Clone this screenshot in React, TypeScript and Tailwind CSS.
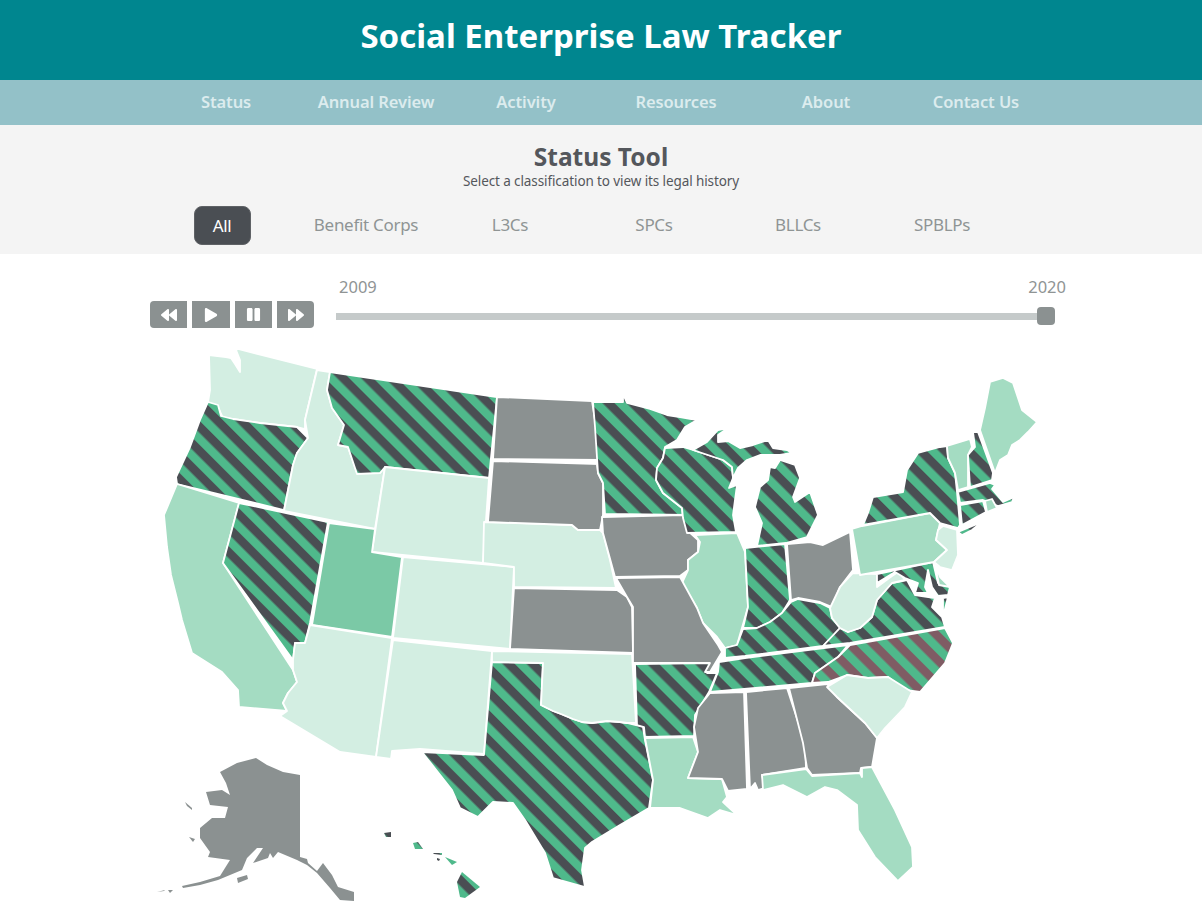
import React from 'react';
import { FaBackward, FaPlay, FaPause, FaForward } from 'react-icons/fa';

const GRAY = '#8b9191';
const PALE = '#d3eee2';
const MID = '#a4dcc2';
const UTAH = '#7bc9a6';
const STRIPE = 'url(#stripes)';
const MAUVE = 'url(#stripesRed)';

const states: { fill: string; points: string }[] = [
  // washington
  { fill: PALE, points: '209,355 226,357 231,358 235,364 240,372 240,360 236,350 238,349 317,369 305,420 305,429 297,427 260,423 233,419 223,418 218,407 208,402 210,390' },
  // oregon
  { fill: STRIPE, points: '208,402 218,405 221,416 233,419 260,423 297,427 308,438 297,453 293,465 284,510 177,484 176,477 190,447 200,420' },
  // california
  { fill: MID, points: '177,484 239,503 223,563 293,670 297,682 288,693 283,703 287,711 239,707 238,690 222,672 192,653 182,620 178,603 171,575 167,547 164,515' },
  // nevada
  { fill: STRIPE, points: '239,503 328,522 310,623 305,643 295,643 293,660 223,563' },
  // idaho
  { fill: PALE, points: '317,370 330,372 327,390 332,408 344,425 338,445 348,447 357,473 380,473 385,467 375,529 284,511 293,465 297,453 308,438 305,420' },
  // montana
  { fill: STRIPE, points: '330,372 497,397 489,478 385,467 380,473 357,474 348,447 338,445 344,425 332,408 327,390' },
  // wyoming
  { fill: PALE, points: '385,467 489,478 483,563 372,552' },
  // utah
  { fill: UTAH, points: '329,523 375,529 372,552 402,557 392,637 312,625' },
  // colorado
  { fill: PALE, points: '403,557 514,567 510,649 393,638' },
  // arizona
  { fill: PALE, points: '310,625 392,638 376,757 340,752 280,716 287,711 283,703 288,693 297,682 293,670 293,660 295,643 305,643' },
  // new mexico
  { fill: PALE, points: '393,640 492,651 484,754 420,749 392,751 391,759 376,757' },
  // texas
  { fill: STRIPE, points: '492,662 543,663 541,705 553,711 561,714 573,719 582,722 592,723 607,721 620,722 627,723 643,727 645,740 653,780 649,808 620,825 592,842 585,848 582,870 585,887 553,878 545,853 525,820 513,803 493,802 478,817 460,808 452,790 422,752 484,755' },
  // oklahoma
  { fill: PALE, points: '492,651 632,654 636,723 627,723 620,722 607,721 592,723 582,722 573,719 561,714 553,711 541,705 543,663 492,662' },
  // nebraska
  { fill: PALE, points: '484,522 572,525 578,530 600,530 603,533 610,560 616,588 514,587 514,567 483,563' },
  // kansas
  { fill: GRAY, points: '514,588 617,590 627,597 632,607 633,653 510,649' },
  // north dakota
  { fill: GRAY, points: '497,397 592,401 595,420 600,460 493,459' },
  // south dakota
  { fill: GRAY, points: '493,461 600,464 597,465 598,473 603,483 603,515 600,530 578,530 572,525 488,522' },
  // minnesota
  { fill: STRIPE, points: '593,402 623,402 623,394 627,403 650,409 667,415 680,417 697,420 685,427 677,440 665,447 663,458 657,468 656,480 663,493 682,508 683,518 687,515 605,514 603,483 598,473 595,427' },
  // iowa
  { fill: GRAY, points: '602,517 683,515 687,530 698,540 698,552 688,560 688,570 680,576 615,577 603,533' },
  // wisconsin
  { fill: STRIPE, points: '665,448 683,447 693,450 723,460 732,467 733,478 729,488 737,485 733,515 736,532 687,533 683,518 682,508 663,493 656,480 657,468 663,458' },
  // michigan upper
  { fill: STRIPE, points: '693,450 707,442 718,430 728,428 718,435 718,442 728,441 740,448 753,445 768,440 773,448 787,450 792,453 780,455 760,455 747,460 738,468 733,478 732,467 723,460' },
  // michigan lower
  { fill: STRIPE, points: '757,546 762,523 755,507 760,487 768,480 770,467 775,468 780,460 795,465 800,478 793,497 795,502 810,492 818,515 807,537 786,543' },
  // illinois
  { fill: MID, points: '695,535 737,533 745,552 748,607 737,645 725,648 717,637 703,623 697,608 682,583 688,570 688,560 698,552 700,542' },
  // indiana
  { fill: STRIPE, points: '745,548 785,544 790,600 782,613 770,622 757,628 743,628 748,607' },
  // ohio
  { fill: GRAY, points: '787,544 810,542 823,545 850,532 853,570 840,587 832,607 820,602 798,598 791,600' },
  // kentucky
  { fill: STRIPE, points: '743,629 757,628 770,622 782,613 791,602 798,599 820,603 830,608 832,618 840,628 823,646 745,656 725,658 725,648 737,645' },
  // tennessee
  { fill: STRIPE, points: '719,662 745,658 848,645 838,657 815,673 812,683 710,692 718,672' },
  // north carolina
  { fill: MAUVE, points: '850,645 945,628 953,643 945,663 920,692 905,690 888,677 868,678 847,675 828,682 812,683 815,673 838,657' },
  // virginia
  { fill: STRIPE, points: '840,628 848,632 860,628 872,617 877,600 892,583 907,580 915,595 935,598 932,607 942,617 945,627 850,643 823,646' },
  // west virginia
  { fill: PALE, points: '830,608 840,587 853,573 877,574 877,587 892,576 898,572 905,580 892,583 877,600 872,617 860,628 848,632 840,628 832,618' },
  // maryland
  { fill: STRIPE, points: '877,574 933,562 938,583 950,587 948,595 938,596 932,587 928,570 925,587 928,593 915,593 918,583 905,578 895,572 877,583' },
  // delaware
  { fill: MID, points: '935,564 940,577 950,587 939,585' },
  // virginia eastern shore
  { fill: STRIPE, points: '943,598 948,597 943,617' },
  // pennsylvania
  { fill: MID, points: '852,529 862,526 930,513 940,523 936,540 947,550 934,562 860,575' },
  // new york
  { fill: STRIPE, points: '863,525 868,513 873,497 903,492 907,470 918,453 940,447 947,446 948,458 955,473 957,492 960,525 958,528 940,523 930,513' },
  // long island
  { fill: STRIPE, points: '958,532 982,522 972,530 962,535' },
  // new jersey
  { fill: PALE, points: '938,530 943,526 957,530 958,555 952,570 940,567 934,562 947,550 936,540' },
  // vermont
  { fill: MID, points: '947,446 970,439 972,447 968,455 968,487 958,490 955,473 948,458' },
  // new hampshire
  { fill: STRIPE, points: '973,432 978,432 993,473 992,480 970,487 968,455 975,447' },
  // maine
  { fill: MID, points: '980,430 985,408 990,382 1003,378 1013,383 1022,410 1037,422 1028,432 1020,440 1012,445 1008,455 1000,460 995,473' },
  // massachusetts
  { fill: STRIPE, points: '958,492 990,483 995,485 992,489 1003,502 1012,498 1012,495 1008,494 1014,497 1012,502 998,506 983,500 960,503' },
  // connecticut
  { fill: STRIPE, points: '960,505 983,501 986,512 962,525' },
  // rhode island
  { fill: MID, points: '985,501 992,499 997,508 987,512' },
  // louisiana
  { fill: MID, points: '645,738 693,737 698,752 688,778 722,779 727,797 723,802 737,815 720,810 708,818 680,808 650,808 653,780' },
  // arkansas
  { fill: STRIPE, points: '635,664 710,663 712,671 707,673 717,673 709,692 695,715 694,736 645,737 644,727 637,725' },
  // missouri
  { fill: GRAY, points: '616,578 680,577 697,608 703,623 718,645 722,652 710,672 705,672 710,663 633,663 633,607 627,597' },
  // mississippi
  { fill: GRAY, points: '710,693 744,692 747,789 728,791 722,779 688,778 698,752 694,727 698,708' },
  // alabama
  { fill: GRAY, points: '746,692 787,688 805,743 806,768 762,775 765,788 758,790 755,783 750,789' },
  // georgia
  { fill: GRAY, points: '789,688 827,684 837,697 865,723 877,738 872,767 861,768 860,773 812,775 807,768 803,743' },
  // south carolina
  { fill: PALE, points: '827,687 847,675 868,678 888,677 912,692 905,707 885,728 877,738 865,723 837,697' },
  // florida
  { fill: MID, points: '762,775 806,769 812,776 860,773 862,777 862,768 872,767 895,810 912,847 913,867 898,881 875,857 858,830 857,805 837,790 825,787 807,797 783,785 763,790' },
];

const noStroke: { fill: string; points: string }[] = [
  // alaska
  { fill: GRAY, points: '256,758 267,765 283,772 300,775 300,857 307,859 308,863 317,871 323,863 332,875 338,887 354,892 354,901 340,900 330,888 317,873 307,865 297,860 278,852 273,858 270,853 268,858 253,863 263,848 257,848 247,858 242,870 218,880 200,885 183,888 182,886 200,882 220,876 230,860 208,857 210,852 200,838 200,828 212,818 225,818 228,807 210,805 206,792 222,790 230,795 226,783 220,772 237,763' },
  { fill: GRAY, points: '237,878 247,875 248,879 238,883' },
  { fill: GRAY, points: '185,802 192,808 192,810 187,806' },
  { fill: GRAY, points: '189,837 195,839 193,842' },
  { fill: GRAY, points: '157,892 165,890 164,891' },
  { fill: GRAY, points: '168,890 173,890 170,893' },
  // hawaii
  { fill: STRIPE, points: '462,872 480,887 465,898 460,897 457,882' },
  { fill: STRIPE, points: '445,857 457,862 452,865' },
  { fill: STRIPE, points: '413,843 418,842 423,849 415,849' },
  { fill: STRIPE, points: '384,833 391,832 391,837 386,837' },
  { fill: STRIPE, points: '433,853 442,853 442,855 434,854' },
  { fill: STRIPE, points: '437,858 440,859 439,861 437,860' },
];

const navItems = ['Status', 'Annual Review', 'Activity', 'Resources', 'About', 'Contact Us'];
const tabs = ['All', 'Benefit Corps', 'L3Cs', 'SPCs', 'BLLCs', 'SPBLPs'];

function UsMap() {
  return (
    <svg viewBox="0 340 1202 562" className="block w-[1202px] h-[562px]">
      <defs>
        <pattern id="stripes" patternUnits="userSpaceOnUse" width="17" height="17" patternTransform="rotate(45) translate(0 3.5)">
          <rect width="17" height="17" fill="#4fb98b" />
          <rect width="17" height="8.5" fill="#4a4e53" />
        </pattern>
        <pattern id="stripesRed" patternUnits="userSpaceOnUse" width="17" height="17" patternTransform="rotate(45) translate(0 3.5)">
          <rect width="17" height="17" fill="#4fb98b" />
          <rect width="17" height="8.5" fill="#7f5c64" />
        </pattern>
      </defs>
      {states.map((s, i) => (
        <polygon key={i} points={s.points} fill={s.fill} stroke="#ffffff" strokeWidth="1.8" strokeLinejoin="round" />
      ))}
      {noStroke.map((s, i) => (
        <polygon key={i} points={s.points} fill={s.fill} />
      ))}
    </svg>
  );
}

export default function App() {
  return (
    <div className="w-[1202px] h-[902px] overflow-hidden bg-white text-[#54575c]" style={{ fontFamily: '"Noto Sans", sans-serif' }}>
      <header className="h-20 bg-[#00868f] flex items-center justify-center pb-2">
        <h1 className="text-[33px] font-bold text-white">Social Enterprise Law Tracker</h1>
      </header>

      <nav className="h-[45px] bg-[#93c1c8] flex justify-center">
        <div className="w-[900px] grid grid-cols-6 items-center">
          {navItems.map((item) => (
            <a key={item} className="text-center text-[16.5px] tracking-[-0.1px] font-semibold text-[#dcecee]">{item}</a>
          ))}
        </div>
      </nav>

      <section className="h-[129px] bg-[#f4f4f4] pt-[16px]">
        <h2 className="text-center text-[24.5px] leading-8 font-bold">Status Tool</h2>
        <p className="text-center text-[13.5px] tracking-[-0.1px] leading-4">Select a classification to view its legal history</p>
        <div className="ml-[150px] mt-[17px] w-[864px] grid grid-cols-6 items-center">
          {tabs.map((tab, i) => (
            <div key={tab} className="flex justify-center">
              <span className={i === 0
                ? 'w-[57px] h-[39px] flex items-center justify-center rounded-lg border border-[#5f6266] bg-[#4a4e53] text-[17px] tracking-[-0.3px] text-white'
                : 'h-[39px] flex items-center pb-[2px] text-[17px] tracking-[-0.3px] text-[#8f9494]'}>{tab}</span>
            </div>
          ))}
        </div>
      </section>

      <section className="h-[86px] pl-[150px] flex">
        <div className="mt-[47px] h-[27px] flex gap-[5px]">
          <button className="w-[37px] h-[27px] bg-[#8b9191] rounded-l flex items-center justify-center text-white text-[16px]"><FaBackward /></button>
          <button className="w-[38px] h-[27px] bg-[#8b9191] flex items-center justify-center text-white text-[14px]"><FaPlay /></button>
          <button className="w-[37px] h-[27px] bg-[#8b9191] flex items-center justify-center text-white text-[15px]"><FaPause /></button>
          <button className="w-[37px] h-[27px] bg-[#8b9191] rounded-r flex items-center justify-center text-white text-[16px]"><FaForward /></button>
        </div>
        <div className="ml-[22px] w-[730px]">
          <div className="mt-[23px] pl-[3px] flex justify-between text-[16.5px] leading-5 text-[#8f9494]">
            <span>2009</span>
            <span>2020</span>
          </div>
          <div className="relative mt-[16px] w-[719px] h-[7px] bg-[#c5caca]">
            <div className="absolute right-0 top-[-6px] w-[18px] h-[18px] rounded bg-[#8b9191]" />
          </div>
        </div>
      </section>

      <UsMap />
    </div>
  );
}
